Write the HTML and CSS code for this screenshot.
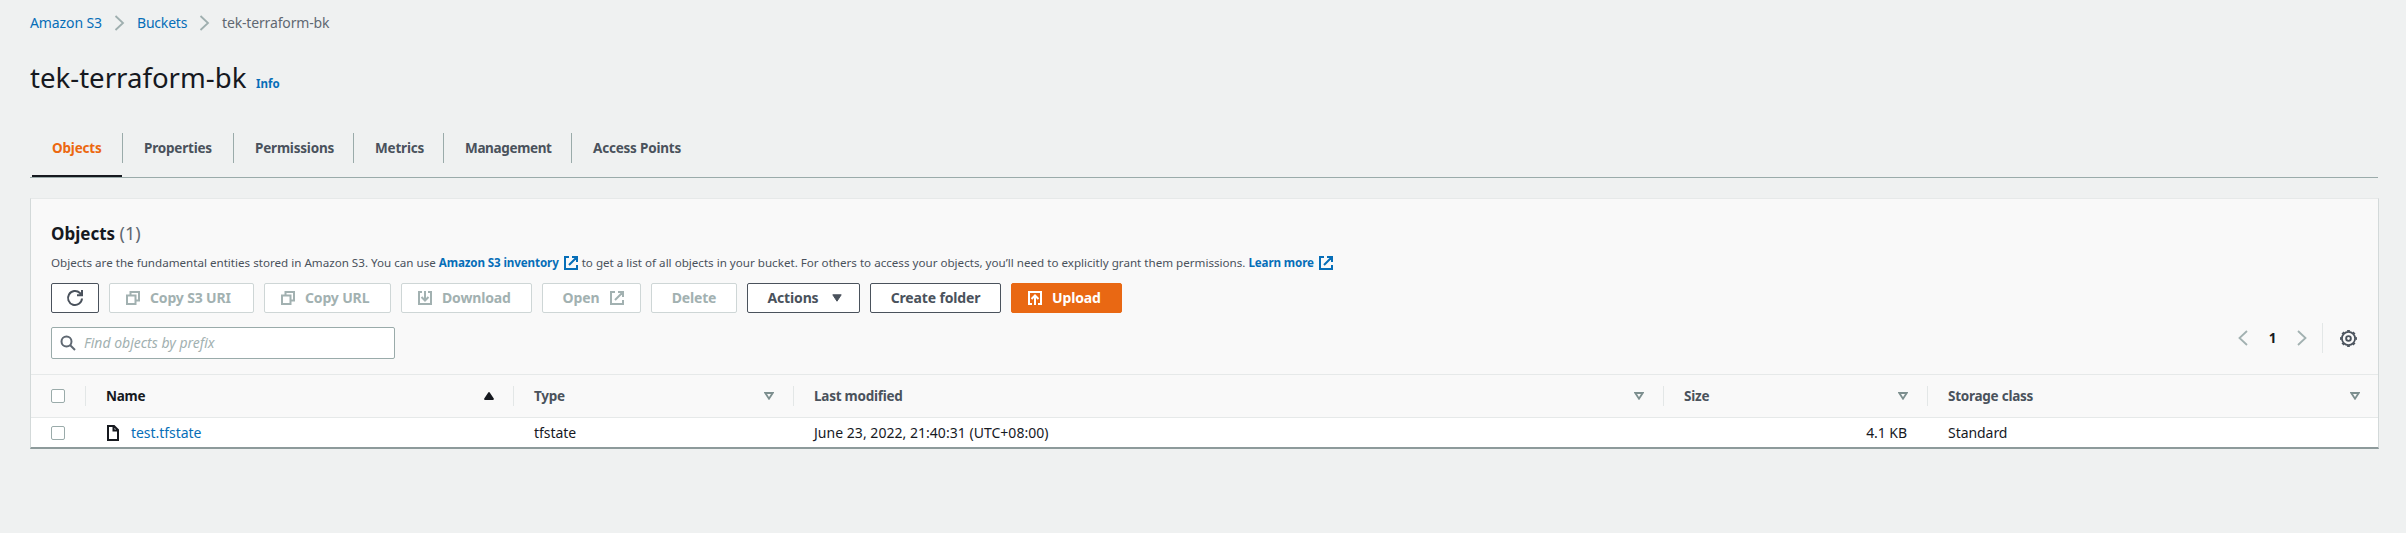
FILE: index.html
```
<!DOCTYPE html>
<html lang="en">
<head>
<meta charset="utf-8">
<title>tek-terraform-bk - S3 bucket</title>
<link rel="stylesheet" href="styles.css">
</head>
<body>
<svg class="defs" aria-hidden="true">
  <symbol id="chevron" viewBox="0 0 16 16"><path d="M4 1l7.5 7L4 15"/></symbol>
  <symbol id="external" viewBox="0 0 16 16"><path d="M6 2H2v12h12v-4M9 2h5v5M14 2L6 10"/></symbol>
  <symbol id="copy" viewBox="0 0 16 16"><path d="M2 5.5h8.5V14H2zM5.5 5V2H14v8.5h-3"/></symbol>
  <symbol id="download" viewBox="0 0 16 16"><path d="M5 2H2v12h12V2h-3M8 1v9M4.5 7L8 10.5 11.500 7"/></symbol>
  <symbol id="upload" viewBox="0 0 16 16"><path d="M5 14H2V2h12v12h-3M8 15V6M4.500 9L8 5.500 11.500 9"/></symbol>
  <symbol id="sort" viewBox="0 0 10 8"><path d="M1.300 1h7.400L5 6.700z"/></symbol>
</svg>

<nav class="breadcrumbs">
  <a class="link crumb-service">Amazon S3</a>
  <svg class="icon crumb-sep"><use href="#chevron"/></svg>
  <a class="link crumb-buckets">Buckets</a>
  <svg class="icon crumb-sep"><use href="#chevron"/></svg>
  <span class="crumb-current">tek-terraform-bk</span>
</nav>

<header class="page-header">
  <h1 class="page-title">tek-terraform-bk</h1>
  <a class="link info">Info</a>
</header>

<div class="tabs">
  <div class="tab tab-objects active"><span>Objects</span></div>
  <div class="tab tab-properties"><span>Properties</span></div>
  <div class="tab tab-permissions"><span>Permissions</span></div>
  <div class="tab tab-metrics"><span>Metrics</span></div>
  <div class="tab tab-management"><span>Management</span></div>
  <div class="tab tab-access"><span>Access Points</span></div>
</div>

<main class="card">
  <section class="card-header">
    <h2 class="card-title">Objects <span class="count">(1)</span></h2>
    <p class="description">
      <span>Objects are the fundamental entities stored in Amazon S3. You can use</span>
      <a class="link desc-link">Amazon S3 inventory</a>
      <svg class="icon link-icon"><use href="#external"/></svg>
      <span class="desc-rest">to get a list of all objects in your bucket. For others to access your objects, you’ll need to explicitly grant them permissions.</span>
      <a class="link desc-link">Learn more</a>
      <svg class="icon link-icon"><use href="#external"/></svg>
    </p>
    <div class="actions">
      <button class="btn btn-refresh"><svg class="icon icon-refresh" viewBox="0 0 18 18"><path d="M16 9.500A7 7 0 1 1 13.900 4L16 6M16 1v5.200h-5"/></svg></button>
      <button class="btn btn-uri disabled"><svg class="icon"><use href="#copy"/></svg>Copy S3 URI</button>
      <button class="btn btn-url disabled"><svg class="icon"><use href="#copy"/></svg>Copy URL</button>
      <button class="btn btn-download disabled"><svg class="icon"><use href="#download"/></svg>Download</button>
      <button class="btn btn-open disabled">Open<svg class="icon"><use href="#external"/></svg></button>
      <button class="btn btn-delete disabled">Delete</button>
      <button class="btn btn-actions">Actions<svg class="caret" viewBox="0 0 10 8"><path d="M.8.800h8.400L5 7.200z"/></svg></button>
      <button class="btn btn-folder">Create folder</button>
      <button class="btn btn-upload"><svg class="icon"><use href="#upload"/></svg>Upload</button>
    </div>
    <div class="filter-row">
      <div class="search">
        <svg class="icon" viewBox="0 0 16 16"><circle cx="6.500" cy="6.500" r="5"/><path d="M10 10l5 5"/></svg>
        <input class="search-input" type="text" placeholder="Find objects by prefix">
      </div>
      <div class="pagination">
        <svg class="icon page-arrow prev"><use href="#chevron"/></svg>
        <span class="page-number">1</span>
        <svg class="icon page-arrow"><use href="#chevron"/></svg>
        <span class="page-divider"></span>
        <svg class="icon gear" viewBox="0 0 16 16"><circle cx="8" cy="8" r="6.200" stroke-width="1.700"/><circle cx="8" cy="8" r="7.300" stroke-width="1.300" pathLength="80" stroke-dasharray="5 5" stroke-dashoffset="2.500"/><circle cx="8" cy="8" r="2.200" stroke-width="1.800"/></svg>
      </div>
    </div>
  </section>

  <section class="table">
    <div class="row head">
      <div class="cell select"><span class="checkbox"></span></div>
      <div class="cell sorted">Name<svg class="sort" viewBox="0 0 10 8"><path d="M5 1l4 6H1z"/></svg></div>
      <div class="cell">Type<svg class="sort"><use href="#sort"/></svg></div>
      <div class="cell">Last modified<svg class="sort"><use href="#sort"/></svg></div>
      <div class="cell">Size<svg class="sort"><use href="#sort"/></svg></div>
      <div class="cell">Storage class<svg class="sort"><use href="#sort"/></svg></div>
    </div>
    <div class="row body">
      <div class="cell select"><span class="checkbox"></span></div>
      <div class="cell file-cell"><svg class="icon file" viewBox="0 0 12 16"><path d="M1 1h6l4 4v10H1zM6.500 1v4.500H11"/></svg><a class="link">test.tfstate</a></div>
      <div class="cell">tfstate</div>
      <div class="cell date">June 23, 2022, 21:40:31 (UTC+08:00)</div>
      <div class="cell size">4.1 KB</div>
      <div class="cell">Standard</div>
    </div>
  </section>
</main>
</body>
</html>
```
FILE: styles.css
```
* { box-sizing: border-box; }

body {
  margin: 0;
  height: 533px;
  padding: 0 27px 0 30px;
  background: #eff1f1;
  color: #16191f;
  font: 14px/20px "Noto Sans", "Open Sans", sans-serif;
  overflow: hidden;
}

.defs { display: none; }
.link { color: #066eb8; }

.icon {
  width: 16px;
  height: 16px;
  flex: none;
  fill: none;
  stroke: currentColor;
  stroke-width: 2;
}

/* Breadcrumbs */
.breadcrumbs {
  display: flex;
  align-items: center;
  height: 20px;
  margin-top: 13px;
}
.crumb-service { width: 81px; letter-spacing: -.1px; }
.crumb-buckets { width: 59px; letter-spacing: -.2px; }
.crumb-sep { width: 17px; margin-right: 9px; color: #9fafaf; stroke-width: 1.8; }
.crumb-current { color: #5f6872; letter-spacing: -.15px; }

/* Title */
.page-header {
  display: flex;
  align-items: baseline;
  height: 36px;
  margin-top: 26px;
}
.page-title {
  width: 226px;
  margin: 0;
  font-size: 27.600px;
  font-weight: 400;
  line-height: 36px;
}
.info { font-size: 11.500px; font-weight: 700; }

/* Tabs */
.tabs {
  display: flex;
  height: 55px;
  margin-top: 28px;
  margin-right: 1px;
  padding-bottom: 1px;
  border-bottom: 1px solid #9aabaa;
}
.tab {
  height: 53px;
  padding-top: 10px;
  color: #4a525c;
  font-size: 13.500px;
  font-weight: 700;
  letter-spacing: -.2px;
}
.tab span {
  display: block;
  height: 30px;
  padding-left: 21px;
  line-height: 30px;
  border-right: 1px solid #9aabaa;
}
.tab.active { color: #ec6810; }
.tab-objects { width: 93px; }
.tab-objects span { padding-left: 22px; }
.tab-properties { width: 111px; }
.tab-permissions { width: 120px; }
.tab-metrics { width: 90px; }
.tab-management { width: 128px; letter-spacing: -.35px; }
.tab-access span { border: 0; }
.tab.active {
  height: 55px;
  background: linear-gradient(#16191f, #16191f) 2px 52px / 90px 2px no-repeat;
}

/* Card */
.card {
  margin-top: 20px;
  height: 251px;
  border: 1px solid #d3d9d9;
  border-top-color: #e6e9e9;
  border-bottom: 2px solid #8d9a9b;
  background: #fff;
}
.card-header {
  height: 175px;
  padding: 21px 18px 0 20px;
  background: #f9f9f9;
}
.card-title {
  margin: 0;
  font-size: 17px;
  line-height: 26px;
}
.count { color: #5f6872; font-size: 18px; font-weight: 400; }

.description {
  display: flex;
  align-items: center;
  height: 18px;
  margin: 7px 0 0;
  color: #4a525c;
  font-size: 11.620px;
}
.desc-link { margin: 0 4px 0 3px; font-weight: 700; letter-spacing: -.12px; }
.link-icon { color: #066eb8; }
.desc-rest { margin-left: 3px; }

.actions { display: flex; gap: 10px; margin-top: 11px; }
.btn {
  display: flex;
  align-items: center;
  justify-content: center;
  gap: 17px;
  height: 30px;
  padding: 0;
  border: 1px solid #4a525c;
  border-radius: 2px;
  background: #fff;
  color: #4a525c;
  font: 700 14px/20px "Noto Sans", "Open Sans", sans-serif;
  letter-spacing: -.15px;
  white-space: nowrap;
}
.btn.disabled { border-color: #ced6d6; color: #a2b1b1; }
.btn-refresh { width: 48px; }
.btn-uri { width: 145px; }
.btn-url { width: 127px; }
.btn-download { width: 131px; }
.btn-uri, .btn-url, .btn-download, .btn-upload {
  justify-content: flex-start;
  gap: 9px;
  padding-left: 15px;
}
.btn-open { width: 99px; gap: 10px; padding-left: 5px; }
.btn-delete { width: 86px; }
.btn-actions { width: 113px; gap: 13px; padding-left: 2px; }
.btn-folder { width: 131px; }
.btn-upload { width: 111px; border-color: #e96813; background: #e96813; color: #fff; }
.icon-refresh { width: 18px; height: 18px; }
.caret { width: 10px; height: 8px; fill: currentColor; stroke: currentColor; }

.filter-row { display: flex; justify-content: space-between; margin-top: 14px; }
.search {
  display: flex;
  align-items: center;
  width: 344px;
  height: 32px;
  padding-left: 8px;
  border: 1px solid #9aabaa;
  border-radius: 2px;
  background: #fff;
  color: #5f6872;
}
.search-input {
  flex: 1;
  margin-left: 8px;
  padding: 0;
  border: 0;
  outline: 0;
  background: transparent;
  font: 14px/20px "Noto Sans", "Open Sans", sans-serif;
}
.search-input::placeholder { color: #a2b1b1; font-style: italic; }

.pagination { display: flex; align-items: center; height: 30px; margin: -4px 3px 0 0; }
.page-arrow { color: #a2b1b1; stroke-width: 1.800; }
.prev { transform: scaleX(-1); }
.page-number { width: 43px; text-align: center; font-size: 13.500px; font-weight: 700; }
.page-divider { width: 1px; height: 30px; margin: 0 17px 0 12px; background: #e3e7e7; }
.gear { width: 17px; height: 17px; color: #4a525c; }

/* Table */
.row {
  display: grid;
  grid-template-columns: 55px 428px 280px 870px 264px 1fr;
  align-items: center;
}
.head {
  height: 44px;
  border: solid #e6e9e9;
  border-width: 1px 0;
  background: #f9f9f9;
  color: #4a525c;
  font-size: 13.500px;
  font-weight: 700;
  letter-spacing: -.25px;
}
.cell { display: flex; align-items: center; padding-left: 20px; height: 20px; }
.head .cell {
  justify-content: space-between;
  padding-right: 19px;
  border-right: 1px solid #e3e7e7;
}
.head .cell:last-child { padding-right: 18px; border-right: 0; }
.head .sorted { color: #16191f; }
.sort { width: 10px; height: 8px; fill: none; stroke: #7d8f8f; stroke-width: 1.800; }
.sorted .sort { fill: #16191f; stroke: #16191f; stroke-linejoin: round; }
.body { height: 29px; letter-spacing: -.05px; }
.date { letter-spacing: .03px; }
.size { justify-content: flex-end; padding-right: 21px; }
.file-cell { padding-left: 21px; }
.file { width: 12px; margin-right: 12px; }
.checkbox {
  width: 14px;
  height: 14px;
  border: 1px solid #9aabaa;
  border-radius: 2px;
  background: #fff;
}
```
